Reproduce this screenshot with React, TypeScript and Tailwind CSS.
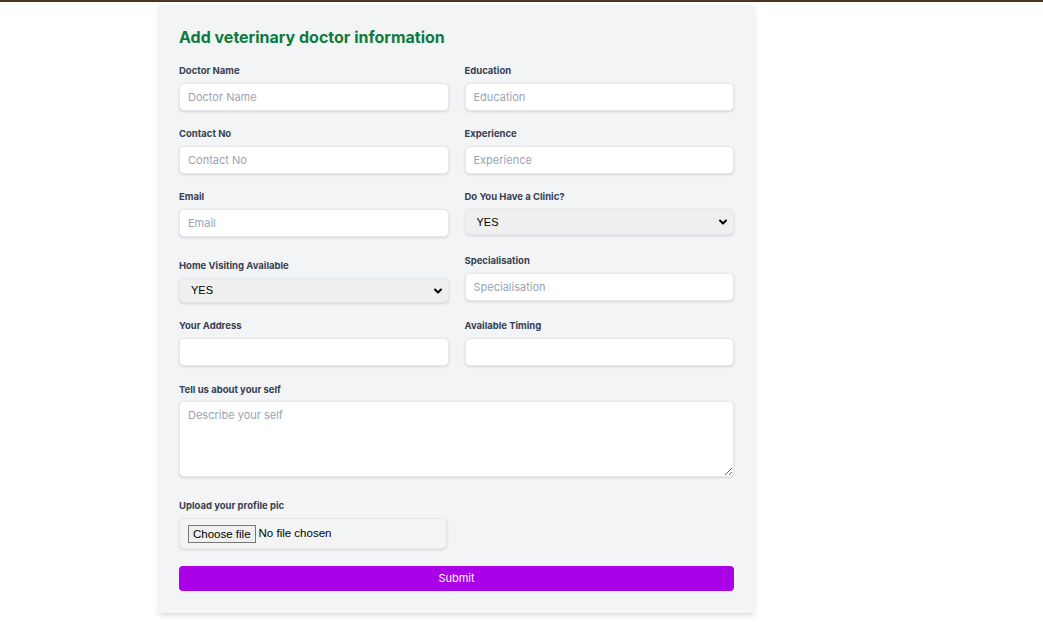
import React from 'react';
import { ChevronDown } from 'lucide-react';

const labelCls = 'block h-[14px] text-[9.5px] leading-[16px] font-bold text-[#374151]';
const inputCls =
  'block w-full h-[28px] rounded-[5px] border border-[#e5e7eb] bg-white px-[8px] text-[11px] text-[#111827] shadow-sm outline-none placeholder:text-[#9ca3af]';

const Field: React.FC<{ label: string; placeholder?: string; className?: string }> = ({
  label,
  placeholder,
  className = '',
}) => (
  <div className={className}>
    <label className={labelCls}>{label}</label>
    <input type="text" placeholder={placeholder} className={`${inputCls} mt-[6px]`} />
  </div>
);

const SelectField: React.FC<{ label: string; className?: string; height: string }> = ({
  label,
  className = '',
  height,
}) => (
  <div className={className}>
    <label className={labelCls}>{label}</label>
    <div className="relative mt-[6px]">
      <select
        defaultValue="YES"
        className={`block w-full ${height} appearance-none rounded-[5px] border border-[#e5e7eb] bg-[#efefef] pl-[11px] text-[11px] text-black shadow-sm outline-none`}
        style={{ fontFamily: '"Liberation Sans", Arial, sans-serif' }}
      >
        <option>YES</option>
        <option>NO</option>
      </select>
      <ChevronDown
        className="pointer-events-none absolute right-[5px] top-1/2 h-[12px] w-[12px] -translate-y-1/2 text-black"
        strokeWidth={4}
      />
    </div>
  </div>
);

const App: React.FC = () => {
  return (
    <div className="min-h-screen bg-white" style={{ fontFamily: 'Inter, "Noto Sans", sans-serif' }}>
      <div className="h-[2px] bg-[#4a3520]" />
      <div className="ml-[158px] mt-[3px] w-[597px] rounded-[2px] bg-[#f3f4f6] px-[21px] pt-[21px] pb-[22px] shadow-md">
        <h2 className="h-[22px] text-[16px] leading-[22px] font-bold text-[#0f7a3a]">
          Add veterinary doctor information
        </h2>

        <form className="mt-[15px]" onSubmit={(e) => e.preventDefault()}>
          <div className="grid grid-cols-2 items-start gap-x-[16px] gap-y-[15px]">
            <Field label="Doctor Name" placeholder="Doctor Name" />
            <Field label="Education" placeholder="Education" />

            <Field label="Contact No" placeholder="Contact No" />
            <Field label="Experience" placeholder="Experience" />

            <Field label="Email" placeholder="Email" />
            <SelectField label="Do You Have a Clinic?" height="h-[26px]" />

            <SelectField label="Home Visiting Available" height="h-[25px]" className="mt-[6px]" />
            <Field label="Specialisation" placeholder="Specialisation" className="mt-[1px]" />

            <Field label="Your Address" />
            <Field label="Available Timing" />
          </div>

          <div className="mt-[16px]">
            <label className={labelCls}>Tell us about your self</label>
            <textarea
              placeholder="Describe your self"
              className="mt-[5px] block h-[76px] w-full rounded-[5px] border border-[#e5e7eb] bg-white px-[8px] py-[5px] text-[11px] shadow-sm outline-none placeholder:text-[#9ca3af]"
            />
          </div>

          <div className="mt-[21px]">
            <label className={labelCls}>Upload your profile pic</label>
            <label
              className="mt-[6px] flex h-[31px] w-[268px] items-center rounded-[5px] border border-[#e5e7eb] bg-[#f3f4f6] px-[8px] text-[11.5px] text-black shadow-sm"
              style={{ fontFamily: '"Liberation Sans", Arial, sans-serif' }}
            >
              <input type="file" className="hidden" />
              <span className="border border-[#767676] bg-[#efefef] px-[4px] leading-[16px]">Choose file</span>
              <span className="ml-[3px]">No file chosen</span>
            </label>
          </div>

          <button
            type="submit"
            className="mt-[17px] block h-[25px] w-full rounded-[4px] bg-[#aa00e8] text-[11px] text-white"
          >
            Submit
          </button>
        </form>
      </div>
    </div>
  );
};

export default App;
